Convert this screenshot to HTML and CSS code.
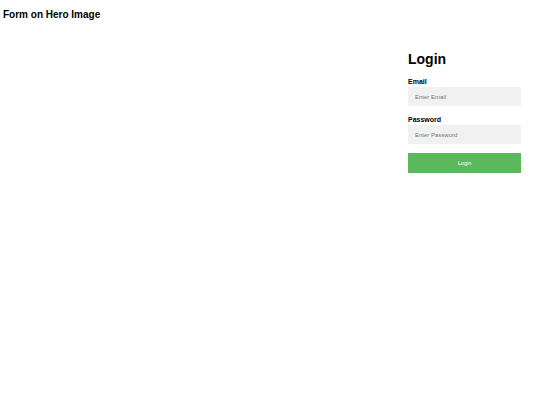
FILE: index.html
```html
<!DOCTYPE html>
<html lang="en">
<head>
    <meta charset="UTF-8">
    <meta name="viewport" content="width=device-width, initial-scale=1.0">
    <title>Form on Hero Image</title>
    <link rel="stylesheet" href="styles.css">
</head>
<body>
    <h2 class="page-title">Form on Hero Image</h2>

    <div class="hero">
        <form class="login-box" onsubmit="return false">
            <h1>Login</h1>

            <label for="email">Email</label>
            <input type="text" id="email" placeholder="Enter Email" name="email">

            <label for="psw">Password</label>
            <input type="password" id="psw" placeholder="Enter Password" name="psw">

            <button type="submit" class="btn">Login</button>
        </form>
    </div>
</body>
</html>
```

FILE: styles.css
```css
body {
    font-family: 'Liberation Sans', Arial, Helvetica, sans-serif;
    margin: 0;
    color: #000;
    background-color: #fff;
}

.page-title {
    font-size: 10px;
    font-weight: bold;
    margin: 0;
    padding: 9px 3px 0;
    line-height: 12px;
}

/* Hero area, the login box sits on its right side */
.hero {
    display: flex;
    justify-content: flex-end;
    padding: 30px 19px 0 0;
    min-height: 340px;
}

.login-box {
    display: flex;
    flex-direction: column;
    width: 113px;
}

.login-box h1 {
    font-size: 14px;
    font-weight: bold;
    margin: 0 0 9px;
    line-height: 17px;
}

.login-box label {
    font-size: 7px;
    font-weight: bold;
    line-height: 9px;
    margin-bottom: 1px;
}

.login-box input {
    height: 19px;
    margin: 0 0 9px;
    padding: 0 7px;
    border: none;
    background-color: #f1f1f1;
    font-family: inherit;
    font-size: 6px;
    outline: none;
}

.login-box input::placeholder {
    color: #757575;
}

.btn {
    height: 20px;
    margin: 0;
    border: none;
    background-color: #5cb85c;
    color: #fff;
    font-family: inherit;
    font-size: 5.5px;
    cursor: pointer;
}

.btn:hover {
    opacity: 0.9;
}
```
